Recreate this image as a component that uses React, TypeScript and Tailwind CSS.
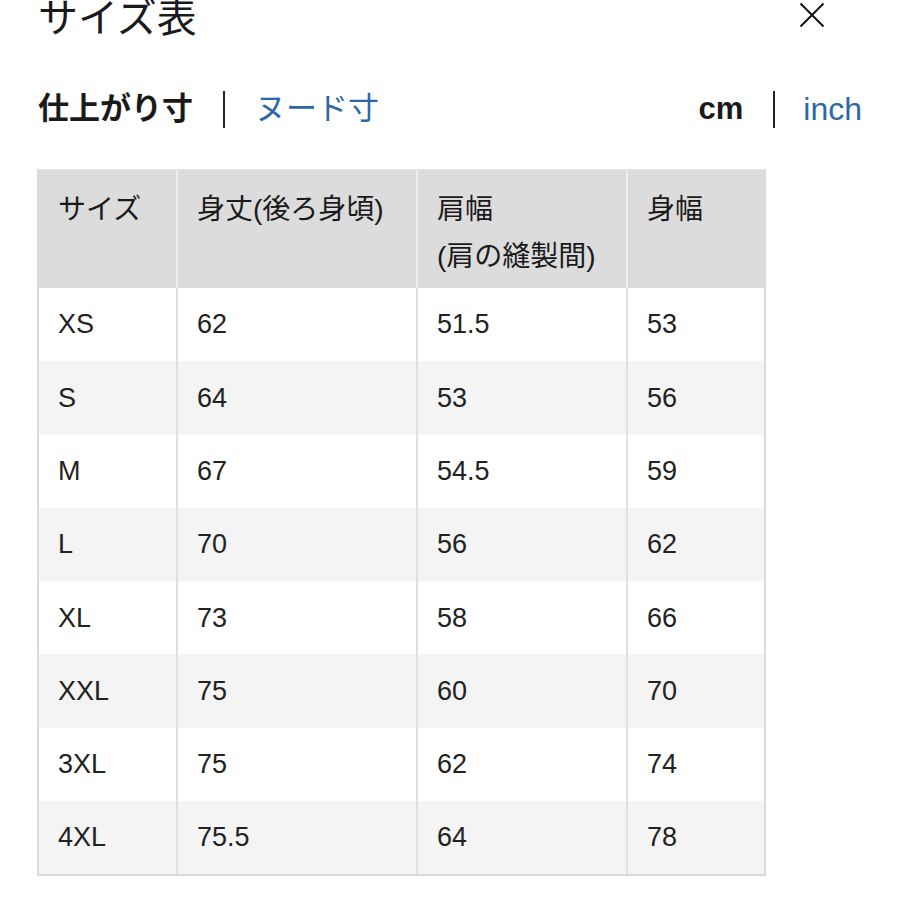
const font = { fontFamily: '"Liberation Sans", "Noto Sans CJK JP", sans-serif' };

const headers = ['サイズ', '身丈(後ろ身頃)', '肩幅\n(肩の縫製間)', '身幅'];

const rows: string[][] = [
  ['XS', '62', '51.5', '53'],
  ['S', '64', '53', '56'],
  ['M', '67', '54.5', '59'],
  ['L', '70', '56', '62'],
  ['XL', '73', '58', '66'],
  ['XXL', '75', '60', '70'],
  ['3XL', '75', '62', '74'],
  ['4XL', '75.5', '64', '78'],
];

const CloseIcon = () => (
  <svg width="26" height="26" viewBox="0 0 26 26" fill="none" stroke="#111" strokeWidth="2">
    <path d="M1.5 1.5 L24.5 24.5 M24.5 1.5 L1.5 24.5" />
  </svg>
);

const Sep = () => <div className="w-[2px] h-[37px] bg-[#222]" />;

export default function App() {
  return (
    <div className="w-[900px] h-[900px] bg-white overflow-hidden text-[#1a1a1a]" style={font}>
      <div className="flex items-center h-[30px] pl-[38px] pr-[75px]">
        <h1 className="text-[40px] leading-[40px] font-normal mt-[6px]">サイズ表</h1>
        <button className="ml-auto -mt-[1px]"><CloseIcon /></button>
      </div>

      <div className="flex items-center h-[40px] mt-[59px] pl-[38px] pr-[38px]">
        <span className="text-[31px] font-bold">仕上がり寸</span>
        <div className="mx-[30px]"><Sep /></div>
        <span className="text-[31px] text-[#2c68a6]">ヌード寸</span>
        <span className="ml-auto text-[31px] font-bold">cm</span>
        <div className="ml-[30px] mr-[28px]"><Sep /></div>
        <span className="text-[32px] text-[#2c68a6]">inch</span>
      </div>

      <div className="ml-[37px] mt-[40px] w-[729px] border-2 border-t border-[#dadada] border-t-[#e4e4e4]">
        <div className="grid grid-cols-[139px_240px_210px_136px] bg-[#dcdcdc] h-[118px]">
          {headers.map((h, i) => (
            <div key={i} className={`pl-[19px] pt-[16px] text-[28px] leading-[47px] whitespace-pre-line ${i < 3 ? 'border-r-2 border-[#eeeeee]' : ''}`}>
              {h}
            </div>
          ))}
        </div>
        {rows.map((r, ri) => (
          <div key={ri} className={`grid grid-cols-[139px_240px_210px_136px] h-[73.3px] ${ri % 2 === 0 ? 'bg-white' : 'bg-[#f4f4f4]'}`}>
            {r.map((c, ci) => (
              <div key={ci} className={`flex items-center pl-[19px] text-[27px] text-[#222] ${ci < 3 ? 'border-r-2 border-[#e0e0e0]' : ''}`}>
                {c}
              </div>
            ))}
          </div>
        ))}
      </div>
    </div>
  );
}
